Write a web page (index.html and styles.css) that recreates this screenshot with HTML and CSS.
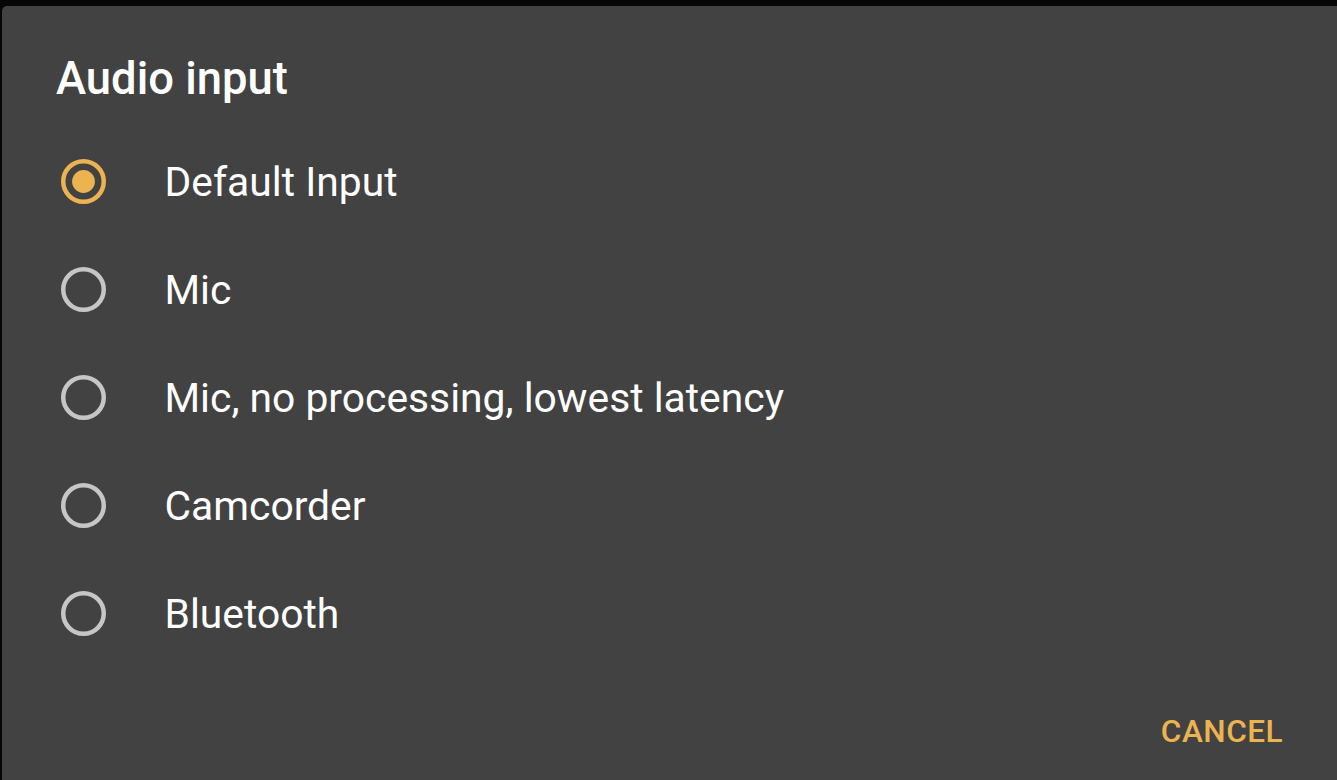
FILE: index.html
```html
<!DOCTYPE html>
<html>
<head>
<meta charset="utf-8">
<link rel="stylesheet" href="styles.css">
</head>
<body>
<div class="dialog">
  <div class="title">Audio input</div>
  <div class="list">
    <div class="row">
      <svg class="radio" viewBox="0 0 45 45"><circle cx="22.5" cy="22.5" r="20.25" fill="none" stroke="#ebb450" stroke-width="4.5"/><circle cx="22.5" cy="22.5" r="11.4" fill="#ebb450"/></svg>
      <span class="label">Default Input</span>
    </div>
    <div class="row">
      <svg class="radio" viewBox="0 0 45 45"><circle cx="22.5" cy="22.5" r="20.25" fill="none" stroke="#c6c6c6" stroke-width="4.5"/></svg>
      <span class="label">Mic</span>
    </div>
    <div class="row">
      <svg class="radio" viewBox="0 0 45 45"><circle cx="22.5" cy="22.5" r="20.25" fill="none" stroke="#c6c6c6" stroke-width="4.5"/></svg>
      <span class="label">Mic, no processing, lowest latency</span>
    </div>
    <div class="row">
      <svg class="radio" viewBox="0 0 45 45"><circle cx="22.5" cy="22.5" r="20.25" fill="none" stroke="#c6c6c6" stroke-width="4.5"/></svg>
      <span class="label">Camcorder</span>
    </div>
    <div class="row">
      <svg class="radio" viewBox="0 0 45 45"><circle cx="22.5" cy="22.5" r="20.25" fill="none" stroke="#c6c6c6" stroke-width="4.5"/></svg>
      <span class="label">Bluetooth</span>
    </div>
  </div>
  <div class="footer">
    <span class="button">CANCEL</span>
  </div>
</div>
</body>
</html>
```
FILE: styles.css
```css
html, body {
  margin: 0;
  padding: 0;
  background: #060606;
  overflow: hidden;
}
body {
  width: 1337px;
  height: 780px;
  font-family: Roboto, "Liberation Sans", sans-serif;
}
.dialog {
  margin: 6px 0 0 2px;
  width: 1340px;
  height: 780px;
  background: #424242;
  border-radius: 5px 5px 0 0;
  box-sizing: border-box;
}
.title {
  padding: 43px 0 0 54px;
  font-size: 45.4px;
  font-weight: 500;
  line-height: 60px;
  color: #ffffff;
}
.list {
  margin-top: 18.5px;
  display: flex;
  flex-direction: column;
}
.row {
  height: 108px;
  display: flex;
  align-items: center;
  padding-left: 58.5px;
}
.radio {
  width: 45px;
  height: 45px;
  flex: none;
}
.label {
  margin-left: 59px;
  font-size: 40.8px;
  color: #ffffff;
}
.footer {
  display: flex;
  justify-content: flex-end;
  margin-top: 23px;
  padding-right: 59px;
}
.button {
  font-size: 31.5px;
  font-weight: 500;
  line-height: 81px;
  color: #ebb450;
  letter-spacing: 0.5px;
}
```
